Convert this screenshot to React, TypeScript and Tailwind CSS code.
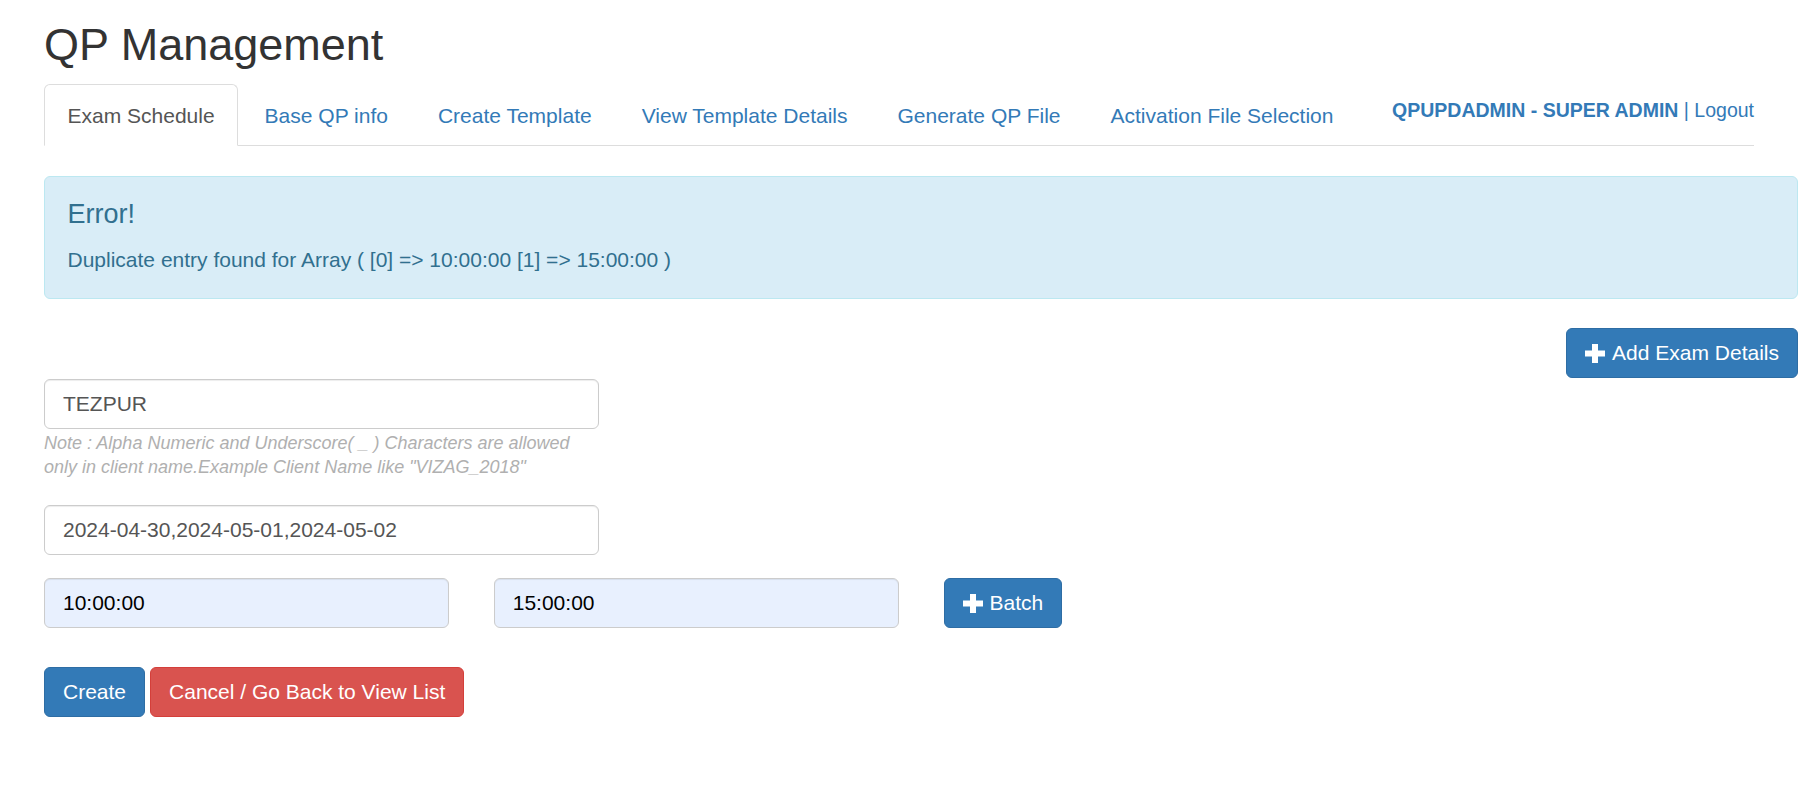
import React from 'react'

const tabs = [
  'Exam Schedule',
  'Base QP info',
  'Create Template',
  'View Template Details',
  'Generate QP File',
  'Activation File Selection',
]

const PlusIcon = () => (
  <svg width="20" height="19" viewBox="0 0 20 19" className="mr-[7px] shrink-0 translate-y-[1px]" fill="#fff">
    <rect x="7" y="0" width="6" height="19" />
    <rect x="0" y="6.5" width="20" height="6" />
  </svg>
)

const inputClass =
  'block h-[50px] w-full rounded-[6px] border border-[#ccc] px-[18px] text-[21px] text-[#555] shadow-[inset_0_1px_1px_rgba(0,0,0,0.075)] outline-none'

const timeClass =
  'block h-[50px] w-full rounded-[6px] border border-[#ccc] bg-[#e8f0fe] px-[18px] text-[21px] text-black shadow-[inset_0_1px_1px_rgba(0,0,0,0.075)] outline-none'

export default function App() {
  return (
    <div className="min-h-screen bg-white pl-[44px] pr-[18px] font-['Liberation_Sans',Arial,sans-serif] text-[21px] leading-[30px] text-[#333]">
      <h2 className="pt-[20px] mb-[15px] text-[45px] leading-[49.5px] font-normal">QP Management</h2>

      <div className="mr-[44px] flex h-[61px] items-end border-b border-[#ddd]">
        {tabs.map((t, i) =>
          i === 0 ? (
            <div
              key={t}
              className="-mb-px mr-[3px] rounded-t-[6px] border border-[#ddd] border-b-white bg-white px-[22.5px] pt-[16px] pb-[14px] text-[#555]"
            >
              {t}
            </div>
          ) : (
            <div key={t} className="-mb-px mr-[3px] border border-transparent px-[22.5px] pt-[16px] pb-[14px] text-[#337ab7]">
              {t}
            </div>
          )
        )}
        <div className="ml-auto self-start pt-[10px] text-[19.5px] text-[#337ab7]">
          <span className="font-bold">QPUPDADMIN - SUPER ADMIN</span> | Logout
        </div>
      </div>

      <div className="mt-[30px] rounded-[6px] border border-[#bce8f1] bg-[#d9edf7] px-[22.5px] pt-[23.5px] pb-[23px] text-[#31708f]">
        <h4 className="mb-[15px] text-[27px] leading-[29.7px] font-normal">Error!</h4>
        <p>Duplicate entry found for Array ( [0] =&gt; 10:00:00 [1] =&gt; 15:00:00 )</p>
      </div>

      <div className="mt-[29px] flex justify-end">
        <button className="flex h-[50px] items-center rounded-[6px] border border-[#2e6da4] bg-[#337ab7] px-[18px] text-white">
          <PlusIcon />
          Add Exam Details
        </button>
      </div>

      <div className="mt-[1px] w-[555px]">
        <input className={inputClass} defaultValue="TEZPUR" />
        <p className="mt-[2px] text-[18px] leading-[24.5px] italic text-[#b0b0b0]">
          Note : Alpha Numeric and Underscore( _ ) Characters are allowed
          <br />
          only in client name.Example Client Name like "VIZAG_2018"
        </p>
        <input className={`${inputClass} mt-[25px]`} defaultValue="2024-04-30,2024-05-01,2024-05-02" />
      </div>

      <div className="mt-[23px] grid grid-cols-4 gap-x-[45px]">
        <input className={timeClass} defaultValue="10:00:00" />
        <input className={timeClass} defaultValue="15:00:00" />
        <div>
          <button className="flex h-[50px] items-center rounded-[6px] border border-[#2e6da4] bg-[#337ab7] px-[18px] text-white">
            <PlusIcon />
            Batch
          </button>
        </div>
      </div>

      <div className="mt-[39px] flex">
        <button className="mr-[5px] h-[50px] rounded-[6px] border border-[#2e6da4] bg-[#337ab7] px-[18px] text-white">
          Create
        </button>
        <button className="h-[50px] rounded-[6px] border border-[#d43f3a] bg-[#d9534f] px-[18px] text-white">
          Cancel / Go Back to View List
        </button>
      </div>
    </div>
  )
}
